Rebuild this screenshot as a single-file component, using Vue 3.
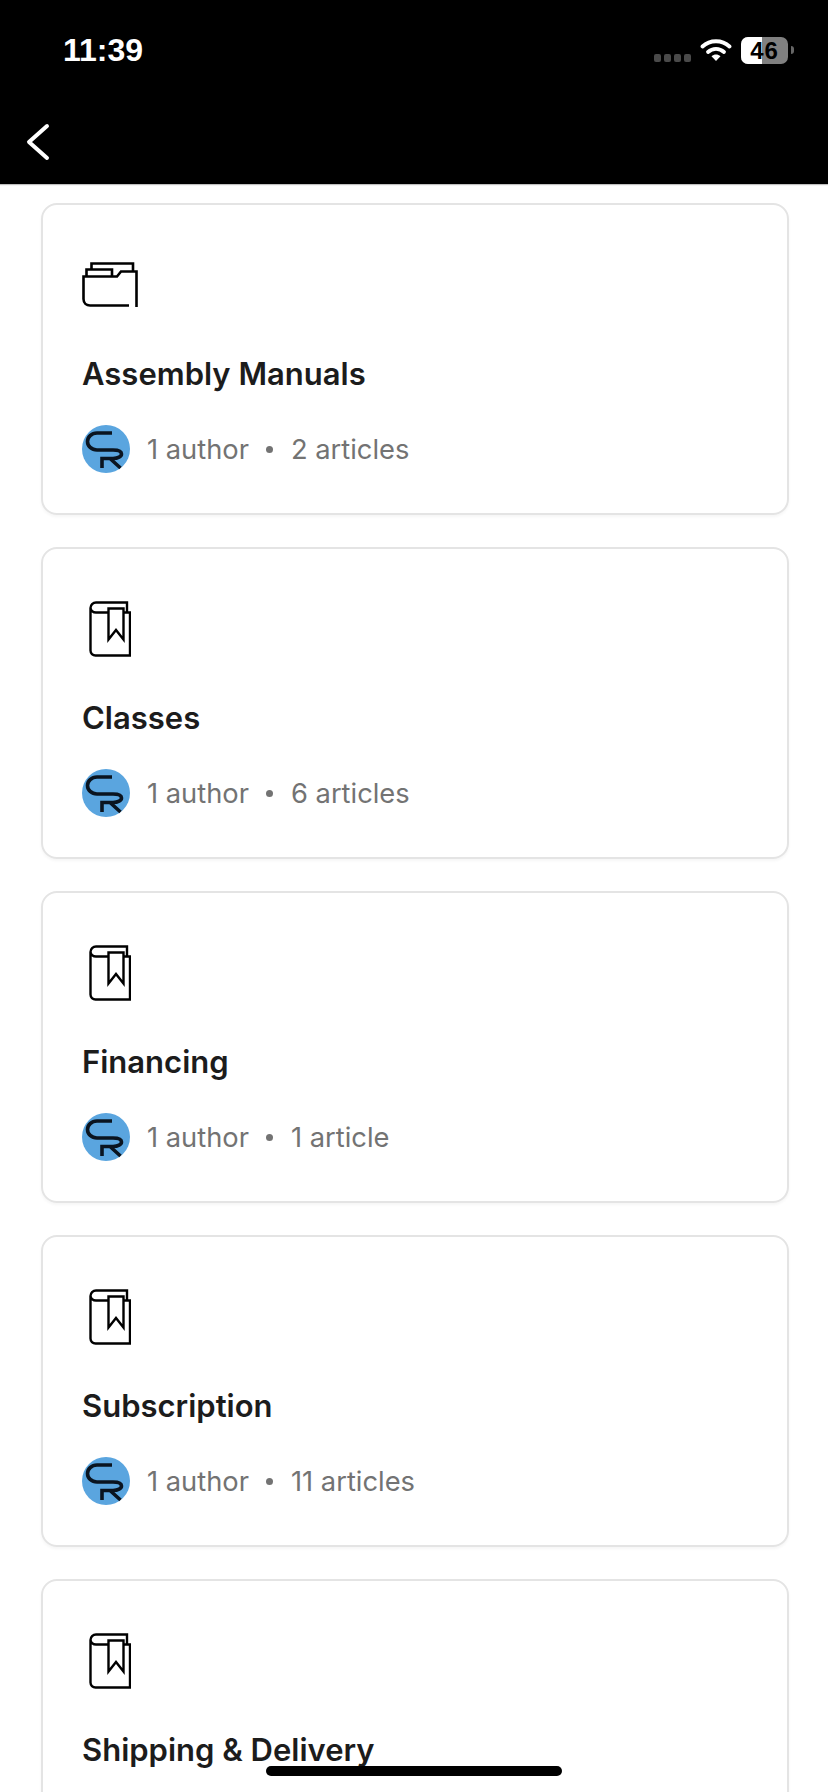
<script setup>
const collections = [
  { title: "Assembly Manuals", icon: "folder", articles: "2 articles" },
  { title: "Classes", icon: "book", articles: "6 articles" },
  { title: "Financing", icon: "book", articles: "1 article" },
  { title: "Subscription", icon: "book", articles: "11 articles" },
  // letzte Karte läuft unten aus dem Bild, Meta-Zeile ist nicht mehr sichtbar
  { title: "Shipping & Delivery", icon: "book", articles: null },
];
</script>

<template>
  <div class="screen">
    <header class="topbar">
      <div class="status">
        <span class="time">11:39</span>
        <div class="status-right">
          <div class="signal"><i></i><i></i><i></i><i></i></div>
          <svg class="wifi" width="32" height="24" viewBox="0 0 32 24">
            <path d="M2.500 8.500C10 1.500 22 1.500 29.500 8.500" fill="none" stroke="#fff" stroke-width="3.800" stroke-linecap="round" />
            <path d="M8 14c4.600-4.200 11.400-4.200 16 0" fill="none" stroke="#fff" stroke-width="3.800" stroke-linecap="round" />
            <path d="M11.500 18.200c2.700-2.300 6.300-2.300 9 0L16 23z" fill="#fff" />
          </svg>
          <div class="battery">
            <div class="battery-body">
              <div class="battery-fill"></div>
              <span class="battery-text">46</span>
            </div>
            <div class="battery-cap"></div>
          </div>
        </div>
      </div>
      <div class="nav">
        <svg width="28" height="40" viewBox="0 0 28 40">
          <path d="M24 4L6 20L24 36" fill="none" stroke="#fff" stroke-width="4" stroke-linecap="round" stroke-linejoin="round" />
        </svg>
      </div>
    </header>

    <main class="list">
      <article v-for="c in collections" :key="c.title" class="card">
        <div class="icon-slot">
          <svg v-if="c.icon === 'folder'" width="56" height="45" viewBox="0 0 56 45">
            <path d="M54.500 45V9.500H39L35 14.500H1.500V37c0 4 3 6.500 6.500 6.500H47" fill="none" stroke="#000" stroke-width="2.600" />
            <path d="M4.500 14V7.500H30V14M9.500 7V1.500H51V9" fill="none" stroke="#000" stroke-width="2.600" />
          </svg>
          <svg v-else class="book" width="42" height="56" viewBox="0 0 42 56">
            <path d="M38 11V1.500H7A5.500 5.500 0 0 0 1.500 7v42.500a5 5 0 0 0 5 5H41V11.500H7A5.500 5 0 0 1 1.500 7" fill="none" stroke="#000" stroke-width="2.400" />
            <path d="M19.500 7.500H34.500V38.500L27 29L19.500 38.500Z" fill="#fff" stroke="#000" stroke-width="2.400" />
          </svg>
        </div>
        <h2 class="title">{{ c.title }}</h2>
        <div v-if="c.articles" class="meta">
          <svg class="avatar" width="48" height="48" viewBox="0 0 48 48">
            <circle cx="24" cy="24" r="24" fill="#5aa5df" />
            <path d="M30 8H15C9.500 8 5.500 12 5.500 16.500S9.500 25 15 25H31C36 25 39.500 26.500 39.500 29S36 33.500 31 33.500H20V43M28 33.500L38.500 43" fill="none" stroke="#0a1420" stroke-width="3.600" />
          </svg>
          <span class="meta-text">1 author</span>
          <span class="dot"></span>
          <span class="meta-text">{{ c.articles }}</span>
        </div>
      </article>
    </main>

    <div class="home-bar"></div>
  </div>
</template>

<style scoped>
.screen {
  position: relative;
  width: 828px;
  height: 1792px;
  overflow: hidden;
  background: #fff;
  font-family: Inter, "Liberation Sans", sans-serif;
}

.topbar {
  height: 184px;
  background: #000;
  color: #fff;
  box-shadow: 0 1px 1px rgba(0, 0, 0, 0.25);
  position: relative;
  z-index: 1;
}

.status {
  height: 92px;
  padding: 30px 34px 0 63px;
  box-sizing: border-box;
  display: flex;
  justify-content: space-between;
  align-items: flex-start;
}

.time {
  font-size: 32px;
  font-weight: 700;
  line-height: 40px;
  font-family: "Liberation Sans", Arial, sans-serif;
}

.status-right {
  display: flex;
  align-items: center;
  height: 40px;
}

.signal {
  display: flex;
  gap: 3px;
  margin-top: 15px;
  margin-right: 9px;
}

.signal i {
  display: block;
  width: 7px;
  height: 8px;
  border-radius: 2px;
  background: #4a4a4a;
}

.wifi {
  margin-right: 9px;
}

.battery {
  display: flex;
  align-items: center;
  gap: 3px;
}

.battery-body {
  position: relative;
  width: 47px;
  height: 27px;
  border-radius: 7px;
  overflow: hidden;
  background: #808080;
}

.battery-fill {
  width: 21px;
  height: 100%;
  background: #fff;
}

.battery-text {
  position: absolute;
  inset: 0;
  text-align: center;
  color: #000;
  font-size: 24px;
  font-weight: 700;
  letter-spacing: 1px;
  line-height: 27px;
  font-family: "Liberation Sans", Arial, sans-serif;
}

.battery-cap {
  width: 3px;
  height: 8px;
  border-radius: 0 3px 3px 0;
  background: #666;
}

.nav {
  padding: 30px 0 0 23px;
}

.list {
  padding: 19px 39px 0 41px;
  display: flex;
  flex-direction: column;
  gap: 32px;
}

.card {
  height: 312px;
  flex-shrink: 0;
  box-sizing: border-box;
  border: 2px solid #e4e4e4;
  border-radius: 16px;
  padding: 51px 39px 0;
  box-shadow: 0 2px 3px rgba(0, 0, 0, 0.04);
}

.icon-slot {
  width: 56px;
  height: 56px;
  display: flex;
  align-items: center;
  justify-content: center;
}

.book {
  margin-top: 2px;
}

.title {
  margin: 44px 0 0;
  font-size: 31px;
  font-weight: 600;
  line-height: 36px;
  color: #1c1c1c;
}

.meta {
  margin-top: 33px;
  display: flex;
  align-items: center;
}

.avatar {
  flex-shrink: 0;
  margin-right: 17px;
}

.meta-text {
  padding-top: 2px;
  font-size: 27.300px;
  color: #737373;
  line-height: 36px;
}

.dot {
  width: 7px;
  height: 7px;
  margin: 0 18px 0 17px;
  border-radius: 50%;
  background: #737373;
}

.home-bar {
  position: absolute;
  left: 266px;
  top: 1766px;
  width: 296px;
  height: 10px;
  border-radius: 5px;
  background: #000;
}
</style>
